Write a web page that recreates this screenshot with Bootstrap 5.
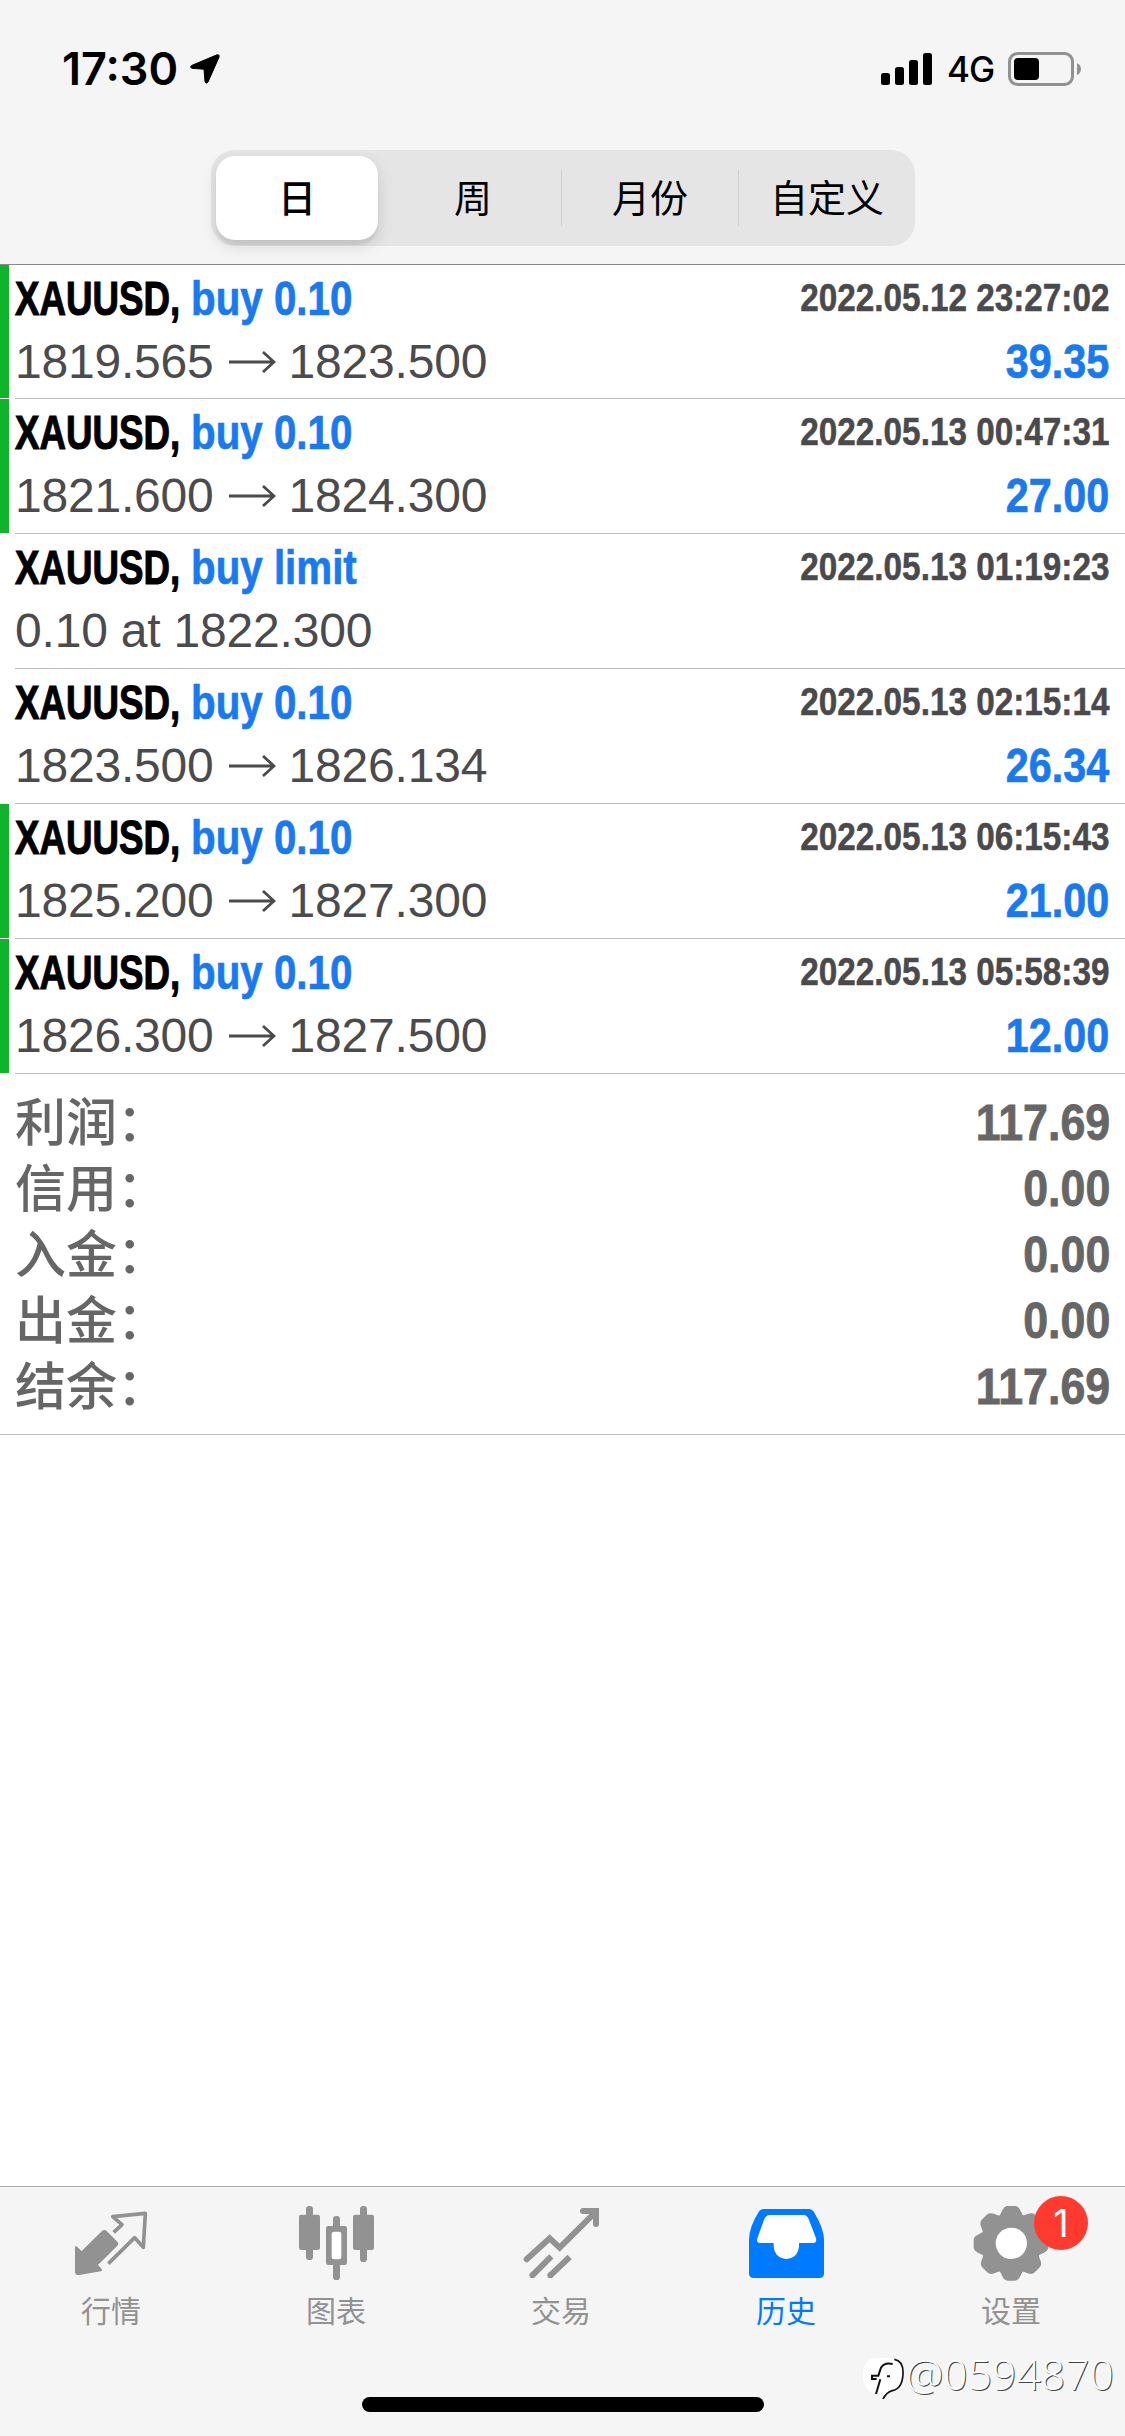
<!DOCTYPE html>
<html lang="zh-CN">
<head>
<meta charset="utf-8">
<meta name="viewport" content="width=device-width, initial-scale=1">
<title>历史</title>
<link href="https://cdn.jsdelivr.net/npm/bootstrap@5.3.0/dist/css/bootstrap.min.css" rel="stylesheet">
<style>
  body { font-family: "Liberation Sans", "Noto Sans CJK SC", sans-serif; background: #fff; color: #000; overflow: hidden; }
  .screen { width: 1125px; height: 2436px; }
  .topbar { height: 265px; background: #f5f5f5; border-bottom: 1px solid #88888b; }
  .status { height: 150px; padding: 38px 43px 0 62px; font-family: Inter, sans-serif; }
  .status-line { height: 62px; }
  .clock { font-size: 45px; font-weight: 600; line-height: 62px; width: 128px; }
  .netname { font-size: 35px; font-weight: 450; line-height: 64px; width: 61px; margin-left: 14px; letter-spacing: -1px; }
  .segments { width: 704px; height: 96px; margin-left: 211px; padding: 6px 0 6px 5px; border-radius: 24px; background: #e5e5e6; font-family: "Noto Sans CJK SC", sans-serif; font-size: 38px; }
  .segments .seg { flex: 0 0 176px; line-height: 79px; height: 84px; text-align: center; color: #000; }
  .segments .seg.on { flex: 0 0 162px; margin-right: 7px; border-radius: 19px; background: #fff; font-weight: 500; box-shadow: 0 6px 16px rgba(0,0,0,.13), 0 5px 2px rgba(0,0,0,.05); }
  .seg-line { width: 2px; height: 56px; background: #cfcfd1; }
  .deal { height: 135px; padding: 4px 16px 0 9px; border-left: 6px solid transparent; position: relative; }
  .deal.first { height: 134px; }
  .deal::after { content: ""; position: absolute; left: 9px; right: 0; bottom: 0; height: 1px; background: #bfbfc1; }
  .deal::before { content: ""; position: absolute; left: -6px; top: 0; bottom: 1px; width: 9px; background: transparent; }
  .deal.gain::before { background: #10b42b; }
  .line-a { height: 60px; line-height: 60px; }
  .line-b { height: 66px; line-height: 66px; }
  .cond { display: inline-block; font-weight: 700; white-space: pre; }
  .sym { font-size: 48px; width: 176px; transform: scaleX(.765); transform-origin: 0 50%; -webkit-text-stroke: 1.1px; }
  .side { font-size: 48px; color: #197af0; transform: scaleX(.84); transform-origin: 0 50%; -webkit-text-stroke: .7px; }
  .when { font-size: 38.5px; line-height: 58px; color: #4a4a4c; transform: scaleX(.865); transform-origin: 100% 50%; -webkit-text-stroke: .5px; }
  .gainval { font-size: 48px; color: #197af0; transform: scaleX(.86); transform-origin: 100% 50%; -webkit-text-stroke: .7px; }
  .price { font-size: 48px; color: #4b4b4d; letter-spacing: -.2px; }
  .price svg { margin: 0 13px 0 15px; }
  .totals { height: 361px; padding: 16px 15px 14px 15px; border-bottom: 1px solid #bfbfc1; color: #666; }
  .totals .item { height: 66px; line-height: 66px; }
  .totals .name { font-family: "Noto Sans CJK SC", sans-serif; font-size: 51px; font-weight: 500; line-height: 59px; }
  .totals .num { font-size: 50px; transform: scaleX(.895); transform-origin: 100% 50%; -webkit-text-stroke: .8px; }
  .tabbar { height: 250px; background: #f5f5f5; border-top: 1px solid #acacae; position: relative; }
  .tabs { height: 160px; margin: 0 0 0 -1.5px; width: 1125px; }
  .tab { width: 225px; padding-top: 17px; color: #929292; font-family: "Noto Sans CJK SC", sans-serif; font-size: 30px; line-height: 51px; position: relative; }
  .tab.current { color: #007aff; }
  .count { position: absolute; left: 135.5px; top: 9px; width: 54px; height: 54px; border-radius: 50%; background: #ff3b30; color: #fff; font-family: Inter, sans-serif; font-size: 38px; line-height: 54px; text-align: center; }
  .homebar { width: 402px; height: 15px; margin: 50px 0 0 362px; border-radius: 8px; background: #000; }
  .stamp { position: absolute; left: 862px; top: 156px; height: 62px; }
  .stamp span { font-family: "Open Sans", sans-serif; font-weight: 300; font-size: 42px; letter-spacing: .4px; line-height: 62px; color: #fcfcfc; text-shadow: 1px 1px 0 #444; }
</style>
</head>
<body>
<div class="screen d-flex flex-column">
  <header class="topbar">
    <div class="status">
      <div class="status-line d-flex align-items-center">
        <span class="clock">17:30</span>
        <svg width="30" height="30" viewBox="0 0 30 30"><path d="M27 .8 1.600 11.500Q-.6 13 1.800 14.300L14 15.200 15 27.600Q16 30.600 18 28L29 3.200Q30 .2 27 .8Z" stroke="#000"/></svg>
        <svg class="ms-auto" width="52" height="34" viewBox="0 0 52 34"><rect y="21" width="9" height="12" rx="2.500"/><rect x="14" y="15" width="9" height="18" rx="2.500"/><rect x="28" y="8" width="9" height="25" rx="2.500"/><rect x="42" y="1" width="9" height="32" rx="2.500"/></svg>
        <span class="netname">4G</span>
        <svg width="74" height="36" viewBox="0 0 74 36"><rect x="1.500" y="2.500" width="63" height="31" rx="8" fill="none" stroke="#919193" stroke-width="3"/><rect x="6" y="7" width="25" height="22" rx="4"/><path d="M69 12Q73 14 73 18T69 24Z" fill="#919193"/></svg>
      </div>
    </div>
    <div class="segments d-flex align-items-center">
      <span class="seg on">日</span>
      <span class="seg">周</span><i class="seg-line"></i>
      <span class="seg">月份</span><i class="seg-line"></i>
      <span class="seg">自定义</span>
    </div>
  </header>

  <main class="flex-grow-1">
    <section>
      <div class="deal first gain">
        <div class="line-a d-flex"><span class="cond sym">XAUUSD,</span><span class="cond side">buy 0.10</span><span class="cond when ms-auto">2022.05.12 23:27:02</span></div>
        <div class="line-b d-flex justify-content-between"><span class="price d-flex align-items-center">1819.565<svg width="47" height="24" viewBox="0 0 47 24"><path d="M0 12H45M34 2 45 12 34 22" fill="none" stroke="#4b4b4d" stroke-width="2.800"/></svg>1823.500</span><span class="cond gainval">39.35</span></div>
      </div>
      <div class="deal gain">
        <div class="line-a d-flex"><span class="cond sym">XAUUSD,</span><span class="cond side">buy 0.10</span><span class="cond when ms-auto">2022.05.13 00:47:31</span></div>
        <div class="line-b d-flex justify-content-between"><span class="price d-flex align-items-center">1821.600<svg width="47" height="24" viewBox="0 0 47 24"><path d="M0 12H45M34 2 45 12 34 22" fill="none" stroke="#4b4b4d" stroke-width="2.800"/></svg>1824.300</span><span class="cond gainval">27.00</span></div>
      </div>
      <div class="deal">
        <div class="line-a d-flex"><span class="cond sym">XAUUSD,</span><span class="cond side">buy limit</span><span class="cond when ms-auto">2022.05.13 01:19:23</span></div>
        <div class="line-b"><span class="price">0.10 at 1822.300</span></div>
      </div>
      <div class="deal">
        <div class="line-a d-flex"><span class="cond sym">XAUUSD,</span><span class="cond side">buy 0.10</span><span class="cond when ms-auto">2022.05.13 02:15:14</span></div>
        <div class="line-b d-flex justify-content-between"><span class="price d-flex align-items-center">1823.500<svg width="47" height="24" viewBox="0 0 47 24"><path d="M0 12H45M34 2 45 12 34 22" fill="none" stroke="#4b4b4d" stroke-width="2.800"/></svg>1826.134</span><span class="cond gainval">26.34</span></div>
      </div>
      <div class="deal gain">
        <div class="line-a d-flex"><span class="cond sym">XAUUSD,</span><span class="cond side">buy 0.10</span><span class="cond when ms-auto">2022.05.13 06:15:43</span></div>
        <div class="line-b d-flex justify-content-between"><span class="price d-flex align-items-center">1825.200<svg width="47" height="24" viewBox="0 0 47 24"><path d="M0 12H45M34 2 45 12 34 22" fill="none" stroke="#4b4b4d" stroke-width="2.800"/></svg>1827.300</span><span class="cond gainval">21.00</span></div>
      </div>
      <div class="deal gain">
        <div class="line-a d-flex"><span class="cond sym">XAUUSD,</span><span class="cond side">buy 0.10</span><span class="cond when ms-auto">2022.05.13 05:58:39</span></div>
        <div class="line-b d-flex justify-content-between"><span class="price d-flex align-items-center">1826.300<svg width="47" height="24" viewBox="0 0 47 24"><path d="M0 12H45M34 2 45 12 34 22" fill="none" stroke="#4b4b4d" stroke-width="2.800"/></svg>1827.500</span><span class="cond gainval">12.00</span></div>
      </div>
    </section>
    <section class="totals">
      <div class="item d-flex justify-content-between"><span class="name">利润：</span><span class="cond num">117.69</span></div>
      <div class="item d-flex justify-content-between"><span class="name">信用：</span><span class="cond num">0.00</span></div>
      <div class="item d-flex justify-content-between"><span class="name">入金：</span><span class="cond num">0.00</span></div>
      <div class="item d-flex justify-content-between"><span class="name">出金：</span><span class="cond num">0.00</span></div>
      <div class="item d-flex justify-content-between"><span class="name">结余：</span><span class="cond num">117.69</span></div>
    </section>
  </main>

  <footer class="tabbar">
    <nav class="tabs d-flex">
      <div class="tab d-flex flex-column align-items-center">
        <svg width="80" height="80" viewBox="213 102 240 240"><path d="M225 233Q225 225 231 230L245 243 306 183Q313 177 320 183L352 215Q358 221 352 227L294 285 304 296Q309 302 302 304L238 315Q225 316 225 305Z" fill="#929292"/><path d="M341 187 366 164 338 140 436 130 430 232 404 203 325 281" fill="none" stroke="#929292" stroke-width="11" stroke-linejoin="round"/></svg>
        <span>行情</span>
      </div>
      <div class="tab d-flex flex-column align-items-center">
        <svg width="80" height="80" viewBox="888 102 240 240"><g fill="#929292"><rect x="918" y="108" width="21" height="162" rx="10"/><rect x="897" y="134" width="63" height="106" rx="7"/><rect x="1080" y="108" width="21" height="168" rx="10"/><rect x="1059" y="134" width="63" height="106" rx="7"/><rect x="999" y="138" width="21" height="192" rx="10"/><rect x="978" y="168" width="63" height="117" rx="7"/></g><rect x="995" y="185" width="29" height="83" rx="7" fill="#fff"/></svg>
        <span>图表</span>
      </div>
      <div class="tab d-flex flex-column align-items-center">
        <svg width="80" height="80" viewBox="363 102 240 240"><g fill="none" stroke="#929292" stroke-width="18"><path d="M380 268 449 205 479 233 585 128" stroke-linecap="round"/><path d="M549 123H588V162" stroke-linecap="round"/><path d="M397 316 454 259M451 316 509 261"/><path d="M397 316h.1M451 316h.1" stroke-linecap="round"/></g></svg>
        <span>交易</span>
      </div>
      <div class="tab current d-flex flex-column align-items-center">
        <svg width="80" height="80" viewBox="1038 102 240 240"><path d="M1092 117H1226Q1237 117 1243 128 1271 174 1272 208V312Q1271 323 1260 324H1059Q1048 323 1047 312V208Q1048 170 1076 126 1081 117 1092 117Z" fill="#007aff"/><path d="M1108 135H1212Q1221 136 1226 147L1248 205Q1251 219 1240 219H1197V229Q1194 264 1159 267 1124 264 1121 229V219H1080Q1068 218 1072 205L1093 147Q1098 136 1108 135Z" fill="#fff"/></svg>
        <span>历史</span>
      </div>
      <div class="tab d-flex flex-column align-items-center">
        <svg width="80" height="80" viewBox="393 102 240 240"><g fill="#929292" transform="translate(513 220)"><circle r="87"/><path id="tooth" d="M-39-78Q-32-84-26-99-20-112-10-112H12Q22-112 28-99 34-84 41-78V78Q34 84 28 99 22 112 12 112H-10Q-20 112-26 99-32 84-39 78Z"/><use href="#tooth" transform="rotate(45)"/><use href="#tooth" transform="rotate(90)"/><use href="#tooth" transform="rotate(135)"/></g><circle cx="514" cy="220" r="47" fill="#fff"/></svg>
        <span>设置</span>
        <span class="count">1</span>
      </div>
    </nav>
    <div class="homebar"></div>
    <div class="stamp d-flex align-items-center">
      <svg width="44" height="50" viewBox="0 0 132 150"><path d="M37 27H88Q121 31 123 66 123 108 101 125 88 130 82 132L65 146 62 132H36Q3 124 3 78 3 33 37 27Z" fill="#fff"/><path d="M97 31Q125 36 123 75 121 119 91 125 72 130 62 153" fill="none" stroke="#111" stroke-width="5"/><path d="M92 45Q67 39 57 56L49 80H30V90H44M55 91 42 135M75 82H84" fill="none" stroke="#111" stroke-width="6"/></svg>
      <span>@0594870</span>
    </div>
  </footer>
</div>
<script src="https://cdn.jsdelivr.net/npm/bootstrap@5.3.0/dist/js/bootstrap.bundle.min.js"></script>
</body>
</html>
